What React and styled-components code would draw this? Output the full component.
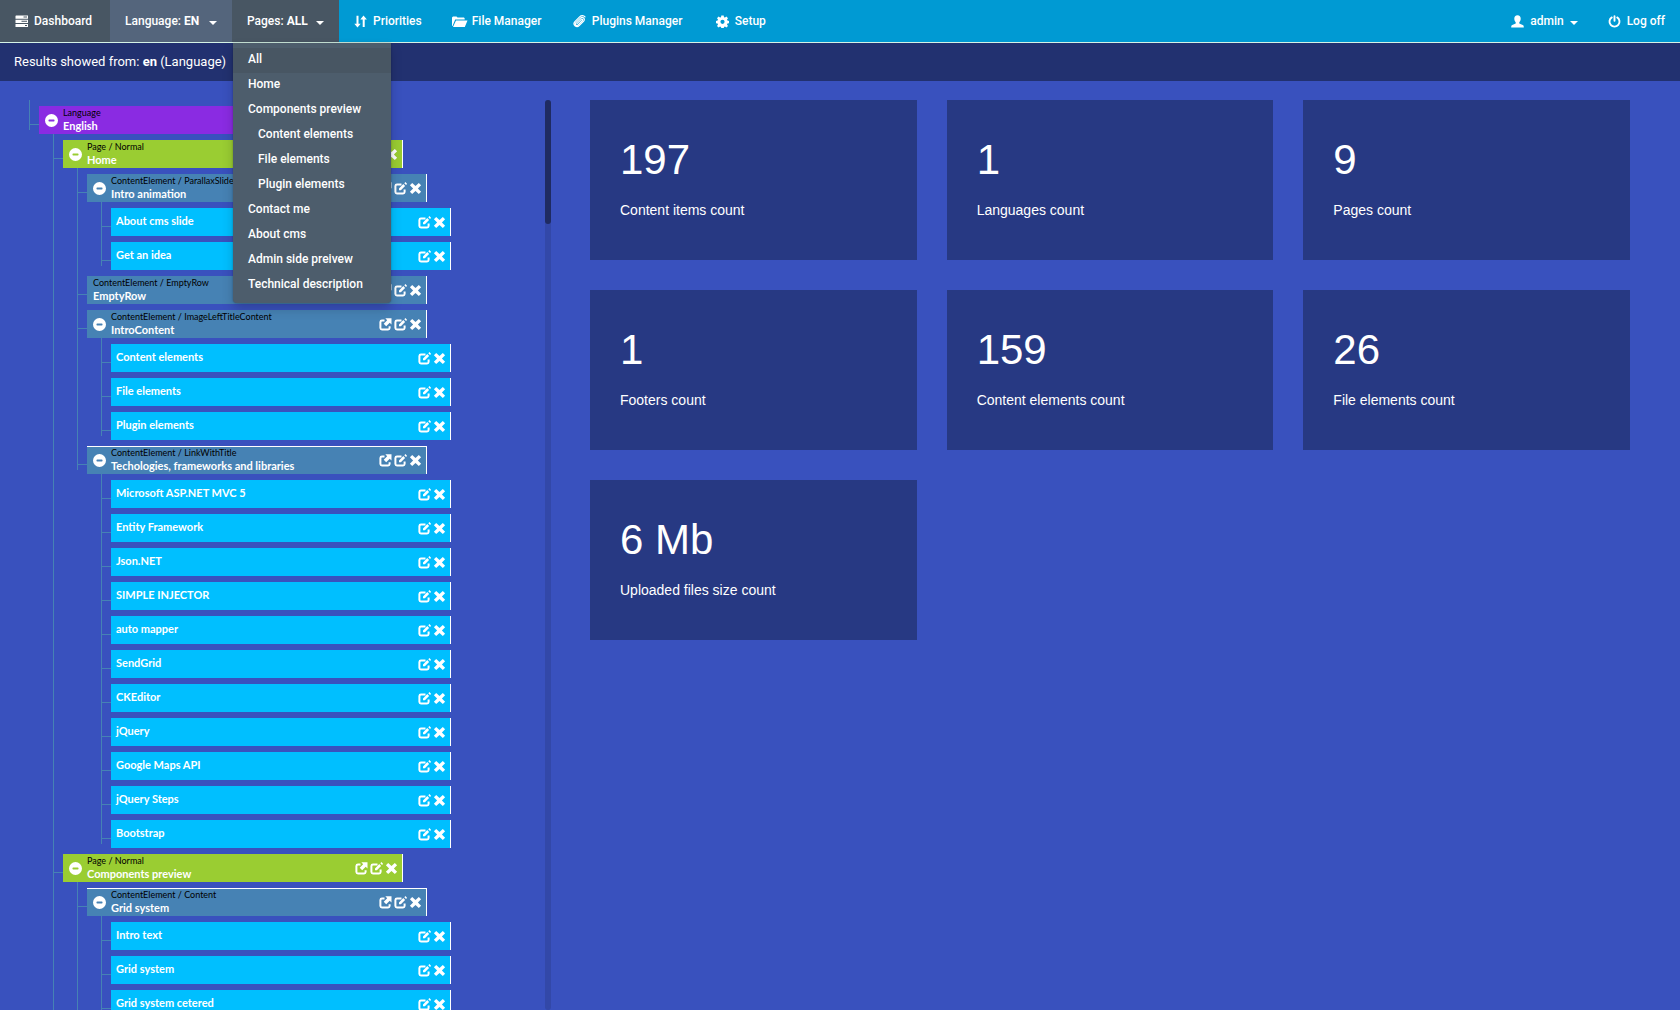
import React from "react";
import styled, { createGlobalStyle, css } from "styled-components";

const GlobalStyle = createGlobalStyle`
  *, *::before, *::after { box-sizing: border-box; }
  body {
    margin: 0;
    background: #3951be;
    color: #fff;
    font-family: "Liberation Sans", Arial, sans-serif;
    font-size: 14px;
    overflow: hidden;
  }
  ul { list-style: none; margin: 0; padding: 0; }
  a { color: inherit; text-decoration: none; }
  button { font: inherit; color: inherit; background: none; border: 0; padding: 0; cursor: pointer; }
`;

const Page = styled.div`
  display: flex;
  flex-direction: column;
  height: 100vh;
`;

const NavBar = styled.nav`
  display: flex;
  justify-content: space-between;
  background: #009ad3;
  border-bottom: 1px solid #d5f3e6;
  font-family: Roboto, "Liberation Sans", sans-serif;
  font-size: 12px;
  font-weight: 500;
  line-height: 20px;
`;

const NavList = styled.ul`
  display: flex;
`;

const NavItem = styled.li`
  position: relative;
  min-width: ${(p) => p.$min || 0}px;
  background: ${(p) => p.$bg || "transparent"};
`;

const navEntry = css`
  display: flex;
  align-items: center;
  width: 100%;
  height: 42px;
  padding: 0 15px;
  white-space: pre;
  b { font-weight: 700; }
`;

const NavLink = styled.a`
  ${navEntry}
  gap: ${(p) => p.$gap || 6}px;
`;

const NavButton = styled.button`
  && { ${navEntry} padding: 0 15px; }
  gap: 6px;
  span:first-child { flex: 1; text-align: left; }
`;

const Caret = styled.span`
  border: 4px solid transparent;
  border-top-color: #fff;
  border-bottom: 0;
  margin-top: 3px;
`;

const Menu = styled.ul`
  position: absolute;
  z-index: 10;
  top: 43px;
  left: 1px;
  width: 158px;
  padding: 5px 0;
  background: #4d5d6c;
  border-radius: 0 0 4px 4px;
  box-shadow: 0 6px 12px rgba(0, 0, 0, 0.18), 0 0 2px rgba(0, 0, 0, 0.3);
`;

const MenuLink = styled.a`
  display: block;
  height: 25px;
  line-height: 23px;
  padding-left: ${(p) => (p.$nested ? 25 : 15)}px;
  background: ${(p) => (p.$active ? "#485663" : "transparent")};
`;

const ResultBar = styled.div`
  height: 38px;
  padding: 0 14px;
  background: #223170;
  font-family: Roboto, "Liberation Sans", sans-serif;
  font-size: 13px;
  line-height: 37px;
`;

const Main = styled.main`
  flex: 1;
  min-height: 0;
  display: grid;
  grid-template-columns: 551px 1fr;
  column-gap: 39px;
  padding: 19px 50px 0 0;
`;

const TreePanel = styled.aside`
  display: flex;
  justify-content: space-between;
  min-height: 0;
  overflow: hidden;
  padding-left: 29px;
`;

const Track = styled.div`
  width: 6px;
  border-radius: 3px;
  background: #3348a8;
`;

const Thumb = styled.div`
  height: 124px;
  border-radius: 3px;
  background: #1f2b62;
`;

const Branch = styled.ul`
  && { padding-left: ${(p) => (p.$root ? 0 : 14)}px; }
`;

const Node = styled.li`
  position: relative;
  padding: 6px 0 0 10px;
  &::before {
    content: "";
    position: absolute;
    left: 0;
    top: 0;
    height: 100%;
    border-left: 1px solid #4682b4;
  }
  &:last-child::before { height: ${(p) => (p.$continues ? "100%" : "30px")}; }
  &::after {
    content: "";
    position: absolute;
    left: 0;
    top: 24px;
    width: 10px;
    border-top: 1px solid #4682b4;
  }
`;

const tones = { language: "#8a2be2", page: "#9acd32", element: "#4682b4", item: "#00bfff" };

const Row = styled.div`
  display: flex;
  align-items: center;
  width: 340px;
  height: 28px;
  padding: 0 4px 0 ${(p) => (p.$tone === "item" ? 5 : 6)}px;
  background: ${(p) => tones[p.$tone]};
  border-right: 1px solid #fff;
  box-shadow: ${(p) => (p.$topLine ? "inset 0 1px #fff" : "none")};
  font-family: Lato, "Liberation Sans", sans-serif;
`;

const Toggle = styled.button`
  display: flex;
  margin-right: 5px;
`;

const Labels = styled.div`
  flex: 1;
  display: flex;
  flex-direction: column;
  white-space: nowrap;
  padding-bottom: ${(p) => (p.$single ? 4 : 2)}px;
`;

const Kind = styled.span`
  color: #000;
  font-size: 9px;
  line-height: 13px;
`;

const Title = styled.a`
  font-size: 11px;
  font-weight: 700;
  line-height: 13px;
`;

const Actions = styled.div`
  display: flex;
  gap: 2px;
  button { display: flex; }
`;

const Cards = styled.section`
  display: grid;
  grid-template-columns: repeat(3, 1fr);
  grid-auto-rows: 160px;
  gap: 30px;
`;

const Card = styled.article`
  padding: 36px 30px;
  background: #273983;
`;

const Count = styled.div`
  font-size: 42px;
  line-height: 48px;
`;

const CountLabel = styled.div`
  margin-top: 16px;
  font-size: 14px;
  line-height: 20px;
`;

const Svg = styled.svg`
  display: block;
  flex: none;
  fill: currentColor;
`;

const shapes = {
  tasks: <path fillRule="evenodd" d="M1 .5h12v3.200H.5V1zM8.500 1.500v1H12v-1zM.5 4.700h12.500v3.200H.5zM6.500 5.700v1H12v-1zM.5 8.900h12.500v3.200H.5zM10 9.900v1h2v-1z" />,
  sort: <path d="M2.500.8h2v8h2.200L3.500 12.500.3 8.800h2.200zM9.500.5 12.900 4.500H10.700V12h-2V4.500H6.300z" />,
  folder: <path d="M0 11V2.500L1 1.500h3.500l1 1H12l.7 1v1H3.200L.5 11zM4 5.500h11.500L12.800 12H1z" />,
  clip: <path fill="none" stroke="currentColor" strokeWidth="1.200" strokeLinecap="round" d="M4 8.700 8.300 4.400c.8-.8 1.900.2 1.100 1.100L5.200 9.800c-1.700 1.700-4-.3-2.300-2.100L7.200 3.400c2.400-2.400 5.500.4 3.500 2.700L6.200 10.600c-2.700 2.700-7-.9-4.300-4L6.600 1.900c2-1.900 4.200-1.300 5.400 0" />,
  cog: <path fillRule="evenodd" d="M5.300.5h2.400l.3 1.700 1 .4 1.400-1 1.600 1.600-1 1.400.4 1 1.600.3v2.400l-1.600.3-.4 1 1 1.400-1.600 1.600-1.400-1-1 .4-.3 1.500H5.300L5 12l-1-.4-1.400 1L1 11l1-1.400-.4-1L0 8.300V5.900l1.600-.3.4-1-1-1.400 1.600-1.600 1.400 1 1-.4zM6.500 4.700a2.100 2.100 0 1 0 0 4.200 2.100 2.100 0 0 0 0-4.200z" />,
  user: <path d="M6.500.3C8.600.3 9.700 1.600 9.700 3.500 9.700 5.200 9.100 6.500 8.300 7.200v1.300l3.400 1.600c.8.400 1.100.8 1.100 2.400H.2c0-1.600.3-2 1.100-2.400l3.400-1.600V7.200C3.900 6.500 3.300 5.200 3.300 3.500 3.300 1.600 4.400.3 6.500.3z" />,
  off: <path fill="none" stroke="currentColor" strokeWidth="1.900" strokeLinecap="round" d="M6.500 1.200v4.600M3.800 2.400a5 5 0 1 0 5.400 0" />,
  minus: <path fillRule="evenodd" d="M6.500 0a6.500 6.500 0 1 0 0 13 6.500 6.500 0 0 0 0-13zM4 5.500h5l.5.5v1l-.5.5H4L3.500 7V6z" />,
  share: (
    <>
      <path fill="none" stroke="currentColor" strokeWidth="2" d="M5.500 2.500H3A1.600 1.600 0 0 0 1.400 4v6A1.600 1.600 0 0 0 3 11.500h6A1.600 1.600 0 0 0 10.600 10V8.200" />
      <path d="M6.300.3h6.200v6.200L10.700 4.700 7.200 8.200 4.700 5.700 8.200 2.200z" />
    </>
  ),
  edit: (
    <>
      <path fill="none" stroke="currentColor" strokeWidth="2" d="M7.500 2.500H3A1.600 1.600 0 0 0 1.400 4v6A1.600 1.600 0 0 0 3 11.500h6A1.600 1.600 0 0 0 10.600 10V7.500" />
      <path d="M5 8.300V6.400L9.300 2.100l1.800 1.800L6.900 8.300zM10.300 1.200 11.400.1l1.700 1.700L12 2.900z" />
    </>
  ),
  remove: <path d="M.9 3.300 3.200 1 6.500 4 9.800 1l2.300 2.300-3.200 3.200 3.200 3.200L9.800 12 6.500 9l-3.300 3L.9 9.700l3.200-3.200z" />,
};

function Icon({ name, width = 13 }) {
  return (
    <Svg width={width} height="13" viewBox={`0 0 ${width} 13`} aria-hidden="true">
      {shapes[name]}
    </Svg>
  );
}

const leaf = (title) => ({ tone: "item", title });

const tree = [
  {
    tone: "language", kind: "Language", title: "English",
    children: [
      {
        tone: "page", kind: "Page / Normal", title: "Home",
        children: [
          { tone: "element", kind: "ContentElement / ParallaxSlider", title: "Intro animation", children: ["About cms slide", "Get an idea"].map(leaf) },
          { tone: "element", kind: "ContentElement / EmptyRow", title: "EmptyRow" },
          { tone: "element", kind: "ContentElement / ImageLeftTitleContent", title: "IntroContent", children: ["Content elements", "File elements", "Plugin elements"].map(leaf) },
          {
            tone: "element", kind: "ContentElement / LinkWithTitle", title: "Techologies, frameworks and libraries", topLine: true,
            children: ["Microsoft ASP.NET MVC 5", "Entity Framework", "Json.NET", "SIMPLE INJECTOR", "auto mapper", "SendGrid", "CKEditor", "jQuery", "Google Maps API", "jQuery Steps", "Bootstrap"].map(leaf),
          },
        ],
      },
      {
        tone: "page", kind: "Page / Normal", title: "Components preview", continues: true,
        children: [
          { tone: "element", kind: "ContentElement / Content", title: "Grid system", topLine: true, continues: true, children: ["Intro text", "Grid system", "Grid system cetered"].map(leaf) },
        ],
      },
    ],
  },
];

function TreeNode({ node }) {
  return (
    <Node $continues={node.continues}>
      <Row $tone={node.tone} $topLine={node.topLine}>
        {node.children && (
          <Toggle aria-label={`Collapse ${node.title}`}><Icon name="minus" /></Toggle>
        )}
        <Labels $single={!node.kind}>
          {node.kind && <Kind>{node.kind}</Kind>}
          <Title href="#">{node.title}</Title>
        </Labels>
        <Actions>
          {node.kind && <button aria-label="Open"><Icon name="share" /></button>}
          <button aria-label="Edit"><Icon name="edit" /></button>
          <button aria-label="Delete"><Icon name="remove" /></button>
        </Actions>
      </Row>
      {node.children && (
        <Branch>
          {node.children.map((child) => <TreeNode key={child.title} node={child} />)}
        </Branch>
      )}
    </Node>
  );
}

const menuItems = [
  ["All"], ["Home"], ["Components preview"], ["Content elements", true], ["File elements", true],
  ["Plugin elements", true], ["Contact me"], ["About cms"], ["Admin side preivew"], ["Technical description"],
];

const counts = [
  ["197", "Content items count"], ["1", "Languages count"], ["9", "Pages count"],
  ["1", "Footers count"], ["159", "Content elements count"], ["26", "File elements count"],
  ["6 Mb", "Uploaded files size count"],
];

export default function App() {
  return (
    <Page>
      <GlobalStyle />
      <NavBar>
        <NavList>
          <NavItem $min={110} $bg="#485663"><NavLink href="#"><Icon name="tasks" />Dashboard</NavLink></NavItem>
          <NavItem $min={122} $bg="#54657c"><NavButton><span>Language: <b>EN</b></span><Caret /></NavButton></NavItem>
          <NavItem $min={107} $bg="#485663">
            <NavButton aria-expanded="true"><span>Pages: <b>ALL</b></span><Caret /></NavButton>
            <Menu>
              {menuItems.map(([label, nested]) => (
                <li key={label}><MenuLink href="#" $nested={nested} $active={label === "All"}>{label}</MenuLink></li>
              ))}
            </Menu>
          </NavItem>
          <NavItem $min={97}><NavLink href="#"><Icon name="sort" />Priorities</NavLink></NavItem>
          <NavItem $min={121}><NavLink href="#" $gap={4}><Icon name="folder" width={16} />File Manager</NavLink></NavItem>
          <NavItem $min={143}><NavLink href="#"><Icon name="clip" />Plugins Manager</NavLink></NavItem>
          <NavItem><NavLink href="#"><Icon name="cog" />Setup</NavLink></NavItem>
        </NavList>
        <NavList>
          <NavItem><NavButton><Icon name="user" />admin<Caret /></NavButton></NavItem>
          <NavItem><NavLink href="#"><Icon name="off" />Log off</NavLink></NavItem>
        </NavList>
      </NavBar>
      <ResultBar>Results showed from: <b>en</b> (Language)</ResultBar>
      <Main>
        <TreePanel>
          <Branch $root>
            {tree.map((node) => <TreeNode key={node.title} node={node} />)}
          </Branch>
          <Track><Thumb /></Track>
        </TreePanel>
        <Cards>
          {counts.map(([value, label]) => (
            <Card key={label}>
              <Count>{value}</Count>
              <CountLabel>{label}</CountLabel>
            </Card>
          ))}
        </Cards>
      </Main>
    </Page>
  );
}
